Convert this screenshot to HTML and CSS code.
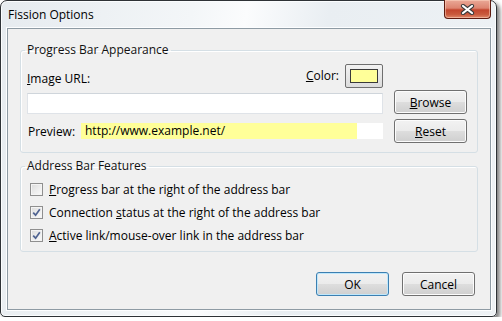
FILE: index.html
```html
<!DOCTYPE html>
<html>
  <head>
    <meta charset="UTF-8">
    <title>Fission Options</title>
    <link rel="stylesheet" href="styles.css">
  </head>
  <body>
    <div class="window">
      <div class="titlebar">
        <span class="title">Fission Options</span>
        <button class="close" title="Close">
          <svg width="15" height="11" viewBox="0 0 15 11">
            <path d="M3 2 L12 9 M12 2 L3 9" stroke="#3b3b3b" stroke-width="4.2" stroke-linecap="round" fill="none"/>
            <path d="M3 2 L12 9 M12 2 L3 9" stroke="#fff" stroke-width="2.2" stroke-linecap="round" fill="none"/>
          </svg>
        </button>
      </div>
      <div class="client">
        <fieldset class="group appearance">
          <legend>Progress Bar Appearance</legend>
          <div class="appearance-grid">
            <div class="url-head">
              <label><u>I</u>mage URL:</label>
              <span class="color-pick">
                <label><u>C</u>olor:</label>
                <span class="swatch"><span class="swatch-fill"></span></span>
              </span>
            </div>
            <span></span>
            <div class="textbox"></div>
            <button class="btn"><u>B</u>rowse</button>
            <div class="preview-row">
              <span class="preview-label">Preview:</span>
              <div class="preview"><div class="preview-fill" style="width: 90%">http://www.example.net/</div></div>
            </div>
            <button class="btn"><u>R</u>eset</button>
          </div>
        </fieldset>
        <fieldset class="group features">
          <legend>Address Bar Features</legend>
          <label class="check"><span class="box"></span><span><u>P</u>rogress bar at the right of the address bar</span></label>
          <label class="check on"><span class="box"><svg width="9" height="9" viewBox="0 0 9 9"><path d="M1.2 4.6 L3.6 7.2 L7.8 1.2" stroke="#4f6391" stroke-width="1.7" fill="none"/></svg></span><span>Connection <u>s</u>tatus at the right of the address bar</span></label>
          <label class="check on"><span class="box"><svg width="9" height="9" viewBox="0 0 9 9"><path d="M1.2 4.6 L3.6 7.2 L7.8 1.2" stroke="#4f6391" stroke-width="1.7" fill="none"/></svg></span><span><u>A</u>ctive link/mouse-over link in the address bar</span></label>
        </fieldset>
        <div class="actions">
          <button class="btn default">OK</button>
          <button class="btn">Cancel</button>
        </div>
      </div>
    </div>
  </body>
</html>
```

FILE: styles.css
```css
body {
  margin: 0;
  background: #fff;
  font-family: 'Open Sans', sans-serif;
  font-size: 12px;
  color: #000;
}
.window {
  width: 495px;
  height: 315px;
  border: 1px solid #2e3236;
  border-radius: 7px 7px 5px 5px;
  background: linear-gradient(100deg, #e6ebef 0%, #f3f6f8 35%, #fbfcfd 45%, #e9eef2 60%, #eef2f5 100%);
  box-shadow: 3px 3px 4px rgba(0, 0, 0, 0.5), inset 0 0 0 1px #fbfdfe;
  display: flex;
  flex-direction: column;
}
.titlebar {
  height: 27px;
  display: flex;
  align-items: flex-start;
  justify-content: space-between;
}
.title {
  margin: 6px 0 0 7px;
  font-size: 12px;
  line-height: 16px;
}
.close {
  width: 47px;
  height: 19px;
  margin: -1px 5px 0 0;
  padding: 0;
  border: 1px solid #5e1b10;
  border-top: none;
  border-radius: 0 0 4px 4px;
  background: linear-gradient(180deg, #eaa997 0%, #dd8470 45%, #c3462e 55%, #c95a3d 80%, #e0886a 100%);
  box-shadow: inset 0 0 0 1px rgba(255, 220, 200, 0.5);
  display: flex;
  align-items: center;
  justify-content: center;
}
.client {
  flex: 1;
  margin: 0 5px 6px 6px;
  border: 1px solid #8e9ba4;
  box-shadow: 0 0 0 1px #fdfeff;
  background: #f0f0f0;
  display: flex;
  flex-direction: column;
}
.group {
  margin: 0 12px;
  border: 1px solid #d5dfe5;
  border-radius: 3px;
  box-shadow: inset 1px 1px 0 #fff;
  padding: 0 8px 0 6px;
}
.group legend {
  padding: 0 2px;
  margin-left: -2px;
  line-height: 16px;
  color: #111;
}
.appearance {
  margin-top: 13px;
  padding-top: 6px;
  padding-bottom: 9px;
}
.appearance-grid {
  display: grid;
  grid-template-columns: 356px 73px;
  column-gap: 11px;
  grid-template-rows: 23px 24px 26px;
  row-gap: 3px;
}
.url-head {
  display: flex;
  justify-content: space-between;
  align-items: flex-end;
}
.url-head label {
  line-height: 16px;
}
.color-pick {
  display: flex;
  align-items: center;
  gap: 6px;
  height: 23px;
}
.swatch {
  border: 1px solid #6f6f6f;
  border-radius: 2px;
  background: linear-gradient(180deg, #f2f2f2, #dcdcdc);
  padding: 4px;
  box-sizing: border-box;
  width: 38px;
  height: 24px;
  display: flex;
}
.swatch-fill {
  flex: 1;
  border: 1px solid #3a3a3a;
  background: #ffff99;
}
.textbox {
  align-self: center;
  height: 21px;
  margin-top: 2px;
  box-sizing: border-box;
  border: 1px solid #dfe3e8;
  border-top-color: #cfd5db;
  background: #fff;
}
.btn {
  font-family: 'Open Sans', sans-serif;
  font-size: 12px;
  color: #000;
  height: 24px;
  padding: 0;
  border: 1px solid #707070;
  border-radius: 3px;
  background: linear-gradient(180deg, #f2f2f2 0%, #ebebeb 48%, #dddddd 52%, #cfcfcf 100%);
  box-shadow: inset 0 0 0 1px #fcfcfc;
}
.appearance-grid .btn:last-child {
  margin-top: 2px;
}
.preview-row {
  display: flex;
  align-items: center;
  height: 24px;
  margin-top: 2px;
  padding-left: 1px;
}
.preview-label {
  width: 53px;
}
.preview {
  flex: 1;
  height: 16px;
  background: #fff;
  display: flex;
}
.preview-fill {
  background: #ffff99;
  padding-left: 4px;
  line-height: 16px;
  white-space: nowrap;
}
.features {
  margin-top: 5px;
  padding-top: 4px;
  padding-bottom: 4px;
}
.check {
  display: flex;
  align-items: center;
  gap: 6px;
  height: 23px;
  margin-left: 3px;
}
.box {
  width: 13px;
  height: 13px;
  box-sizing: border-box;
  border: 1px solid #8f8f8f;
  background: linear-gradient(135deg, #dcdcdc, #fbfbfb);
  box-shadow: inset 0 0 0 1px #f4f4f4;
  display: flex;
  align-items: center;
  justify-content: center;
}
.actions {
  display: flex;
  justify-content: flex-end;
  gap: 13px;
  margin: 20px 15px 0 0;
}
.actions .btn {
  width: 73px;
}
.btn.default {
  border-color: #3c7fb1;
  box-shadow: inset 0 0 0 1px #bfe7fb;
}
```
